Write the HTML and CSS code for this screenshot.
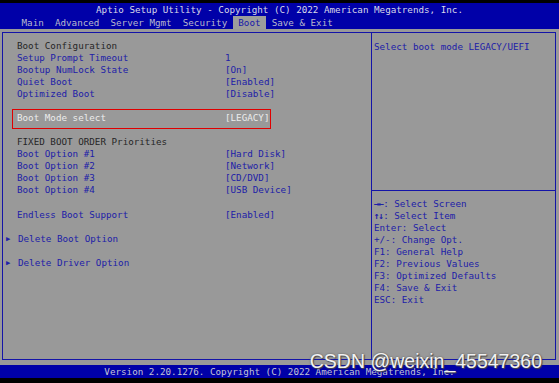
FILE: index.html
```html
<!DOCTYPE html>
<html lang="en">
<head>
    <meta charset="UTF-8">
    <meta name="viewport" content="width=device-width, initial-scale=1.0">
    <title>Aptio Setup Utility</title>
    <link rel="stylesheet" href="styles.css">
</head>
<body>
    <div class="screen">
        <div class="top-edge"></div>
        <header class="header">
            <div class="title">Aptio Setup Utility - Copyright (C) 2022 American Megatrends, Inc.</div>
            <nav class="tabs">
                <span class="tab">Main</span>
                <span class="tab">Advanced</span>
                <span class="tab">Server Mgmt</span>
                <span class="tab">Security</span>
                <span class="tab active">Boot</span>
                <span class="tab">Save &amp; Exit</span>
            </nav>
        </header>

        <main class="main">
            <div class="frame">
                <section class="options">
                    <div class="row heading">Boot Configuration</div>
                    <div class="row"><span class="label">Setup Prompt Timeout</span><span>1</span></div>
                    <div class="row"><span class="label">Bootup NumLock State</span><span>[On]</span></div>
                    <div class="row"><span class="label">Quiet Boot</span><span>[Enabled]</span></div>
                    <div class="row"><span class="label">Optimized Boot</span><span>[Disable]</span></div>
                    <div class="row blank"></div>
                    <div class="row selected"><span class="label">Boot Mode select</span><span>[LEGACY]</span></div>
                    <div class="row blank"></div>
                    <div class="row heading">FIXED BOOT ORDER Priorities</div>
                    <div class="row"><span class="label">Boot Option #1</span><span>[Hard Disk]</span></div>
                    <div class="row"><span class="label">Boot Option #2</span><span>[Network]</span></div>
                    <div class="row"><span class="label">Boot Option #3</span><span>[CD/DVD]</span></div>
                    <div class="row"><span class="label">Boot Option #4</span><span>[USB Device]</span></div>
                    <div class="row blank"></div>
                    <div class="row"><span class="label">Endless Boot Support</span><span>[Enabled]</span></div>
                    <div class="row blank"></div>
                    <div class="row"><span class="arrow">&#9654;</span><span class="label">Delete Boot Option</span></div>
                    <div class="row blank"></div>
                    <div class="row"><span class="arrow">&#9654;</span><span class="label">Delete Driver Option</span></div>
                </section>

                <aside class="side">
                    <div class="help-text">Select boot mode LEGACY/UEFI</div>
                    <div class="keys">
                        <div class="key"><span class="sym">&rarr;&larr;</span>: Select Screen</div>
                        <div class="key"><span class="sym">&uarr;&darr;</span>: Select Item</div>
                        <div class="key">Enter: Select</div>
                        <div class="key">+/-: Change Opt.</div>
                        <div class="key">F1: General Help</div>
                        <div class="key">F2: Previous Values</div>
                        <div class="key">F3: Optimized Defaults</div>
                        <div class="key">F4: Save &amp; Exit</div>
                        <div class="key">ESC: Exit</div>
                    </div>
                </aside>
            </div>
        </main>

        <footer class="footer">Version 2.20.1276. Copyright (C) 2022 American Megatrends, Inc.</footer>
        <div class="bottom-edge"></div>

        <div class="watermark">CSDN @weixin_45547360</div>
    </div>
</body>
</html>
```

FILE: styles.css
```css
body {
    margin: 0;
    background-color: #000;
    font-family: "DejaVu Sans Mono", "Liberation Mono", monospace;
    font-size: 9.24px;
}

.screen {
    position: relative;
    width: 559px;
    height: 383px;
    display: flex;
    flex-direction: column;
    overflow: hidden;
}

.top-edge {
    height: 3px;
    background-color: #000;
}

.header {
    background-color: #0000a8;
    height: 26px;
}

.title {
    height: 13px;
    box-sizing: border-box;
    padding-top: 1px;
    line-height: 12px;
    text-align: center;
    color: #d8d8e8;
}

.tabs {
    display: flex;
    height: 13px;
    padding-left: 16px;
}

.tab {
    height: 13px;
    box-sizing: border-box;
    padding: 1px 5.56px 0;
    line-height: 12px;
    color: #b8b8cc;
    white-space: pre;
}

.tab.active {
    background-color: #9c9c9c;
    color: #1818a8;
}

.main {
    flex: 1;
    background-color: #999999;
    padding: 3px 3px 5px 2px;
}

.frame {
    height: 100%;
    box-sizing: border-box;
    border: 1px solid #1414a8;
    display: flex;
}

.options {
    width: 369px;
    border-right: 1px solid #1414a8;
    padding: 7px 0 0 14px;
    box-sizing: border-box;
    color: #2020a8;
}

.row {
    display: flex;
    height: 12px;
    line-height: 12px;
    white-space: pre;
}

.row.blank {
    height: 12.2px;
}

.row .label {
    width: 208px;
}

.heading {
    color: #262626;
}

.selected {
    position: relative;
    color: #ececec;
}

.selected::after {
    content: "";
    position: absolute;
    top: -3px;
    bottom: -5px;
    left: -5px;
    width: 257px;
    border: 1px solid #e00000;
}

.arrow {
    width: 12px;
    margin-left: -12px;
    font-size: 7px;
    padding-left: 1px;
}

.side {
    flex: 1;
    display: flex;
    flex-direction: column;
    color: #2020a8;
}

.help-text {
    height: 158px;
    border-bottom: 1px solid #1414a8;
    padding: 8px 0 0 2px;
    box-sizing: border-box;
    line-height: 12px;
}

.keys {
    padding: 7px 0 0 2px;
}

.key {
    height: 12px;
    line-height: 12px;
    white-space: pre;
}

.sym {
    letter-spacing: -1px;
    font-weight: bold;
}

.footer {
    height: 13px;
    line-height: 13px;
    background-color: #0000a8;
    color: #c4c4d4;
    text-align: center;
}

.bottom-edge {
    height: 5px;
    background-color: #000;
}

.watermark {
    position: absolute;
    right: 17px;
    top: 350px;
    font-family: "Liberation Sans", Arial, sans-serif;
    font-size: 19.5px;
    color: #f2f2f2;
    text-shadow: 0 0 2px #555, 1px 1px 1px #444;
}
```
